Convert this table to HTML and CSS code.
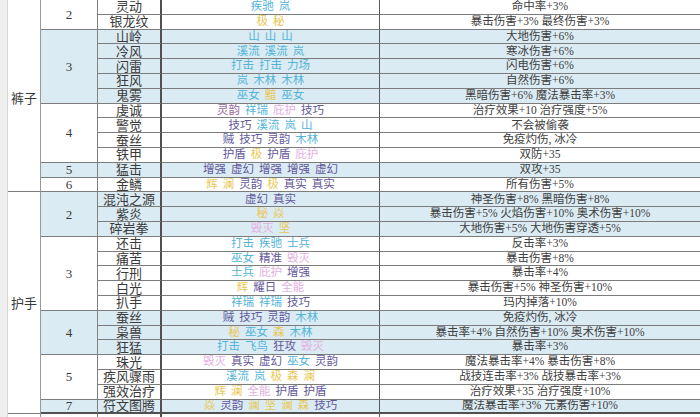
FILE: index.html
```html
<!DOCTYPE html>
<html lang="zh">
<head>
<meta charset="utf-8">
<link rel="stylesheet" href="styles.css">
</head>
<body>
<div class="sheet">
  <div class="strip"></div>

  <div class="cat s13">裤子</div>
  <div class="lvl s2">2</div>
  <div class="name">灵动</div><div class="rune"><i class="b">疾驰</i><i class="b">岚</i></div><div class="eff">命中率+3%</div>
  <div class="name">银龙纹</div><div class="rune"><i class="y">极</i><i class="y">秘</i></div><div class="eff">暴击伤害+3% 最终伤害+3%</div>

  <div class="lvl s5 blue">3</div>
  <div class="name blue">山岭</div><div class="rune blue"><i class="b">山</i><i class="b">山</i><i class="b">山</i></div><div class="eff blue">大地伤害+6%</div>
  <div class="name blue">冷风</div><div class="rune blue"><i class="b">溪流</i><i class="b">溪流</i><i class="b">岚</i></div><div class="eff blue">寒冰伤害+6%</div>
  <div class="name blue">闪雷</div><div class="rune blue"><i class="b">打击</i><i class="b">打击</i><i class="b">力场</i></div><div class="eff blue">闪电伤害+6%</div>
  <div class="name blue">狂风</div><div class="rune blue"><i class="b">岚</i><i class="b">木林</i><i class="b">木林</i></div><div class="eff blue">自然伤害+6%</div>
  <div class="name blue">鬼雾</div><div class="rune blue"><i class="b">巫女</i><i class="y">黯</i><i class="b">巫女</i></div><div class="eff blue">黑暗伤害+6% 魔法暴击率+3%</div>

  <div class="lvl s4">4</div>
  <div class="name">虔诚</div><div class="rune"><i class="m">灵韵</i><i class="b">祥瑞</i><i class="p">庇护</i><i class="v">技巧</i></div><div class="eff">治疗效果+10 治疗强度+5%</div>
  <div class="name">警觉</div><div class="rune"><i class="v">技巧</i><i class="b">溪流</i><i class="b">岚</i><i class="b">山</i></div><div class="eff">不会被偷袭</div>
  <div class="name">蚕丝</div><div class="rune"><i class="v">贼</i><i class="v">技巧</i><i class="v">灵韵</i><i class="b">木林</i></div><div class="eff">免疫灼伤, 冰冷</div>
  <div class="name">铁甲</div><div class="rune"><i class="v">护盾</i><i class="y">极</i><i class="v">护盾</i><i class="p">庇护</i></div><div class="eff">双防+35</div>

  <div class="lvl blue">5</div>
  <div class="name blue">猛击</div><div class="rune blue"><i class="v">增强</i><i class="v">虚幻</i><i class="v">增强</i><i class="v">增强</i><i class="v">虚幻</i></div><div class="eff blue">双攻+35</div>

  <div class="lvl">6</div>
  <div class="name">金鳞</div><div class="rune"><i class="y">辉</i><i class="y">澜</i><i class="v">灵韵</i><i class="y">极</i><i class="v">真实</i><i class="v">真实</i></div><div class="eff">所有伤害+5%</div>

  <div class="cat s15 cat2">护手</div>
  <div class="lvl s3 blue">2</div>
  <div class="name blue">混沌之源</div><div class="rune blue"><i class="v">虚幻</i><i class="v">真实</i></div><div class="eff blue">神圣伤害+8% 黑暗伤害+8%</div>
  <div class="name blue">紫炎</div><div class="rune blue"><i class="y">秘</i><i class="y">焱</i></div><div class="eff blue">暴击伤害+5% 火焰伤害+10% 奥术伤害+10%</div>
  <div class="name blue">碎岩拳</div><div class="rune blue"><i class="p">毁灭</i><i class="y">坚</i></div><div class="eff blue">大地伤害+5% 大地伤害穿透+5%</div>

  <div class="lvl s5">3</div>
  <div class="name">还击</div><div class="rune"><i class="b">打击</i><i class="b">疾驰</i><i class="b">士兵</i></div><div class="eff">反击率+3%</div>
  <div class="name">痛苦</div><div class="rune"><i class="b">巫女</i><i class="v">精准</i><i class="p">毁灭</i></div><div class="eff">暴击伤害+8%</div>
  <div class="name">行刑</div><div class="rune"><i class="b">士兵</i><i class="p">庇护</i><i class="v">增强</i></div><div class="eff">暴击率+4%</div>
  <div class="name">白光</div><div class="rune"><i class="y">辉</i><i class="v">耀日</i><i class="p">全能</i></div><div class="eff">暴击伤害+5% 神圣伤害+10%</div>
  <div class="name">扒手</div><div class="rune"><i class="b">祥瑞</i><i class="b">祥瑞</i><i class="v">技巧</i></div><div class="eff">玛内掉落+10%</div>

  <div class="lvl s3 blue">4</div>
  <div class="name blue">蚕丝</div><div class="rune blue"><i class="v">贼</i><i class="v">技巧</i><i class="v">灵韵</i><i class="b">木林</i></div><div class="eff blue">免疫灼伤, 冰冷</div>
  <div class="name blue">枭兽</div><div class="rune blue"><i class="y">秘</i><i class="b">巫女</i><i class="y">森</i><i class="b">木林</i></div><div class="eff blue">暴击率+4% 自然伤害+10% 奥术伤害+10%</div>
  <div class="name blue">狂猛</div><div class="rune blue"><i class="b">打击</i><i class="b">飞鸟</i><i class="v">狂攻</i><i class="p">毁灭</i></div><div class="eff blue">暴击率+3%</div>

  <div class="lvl s3">5</div>
  <div class="name">珠光</div><div class="rune"><i class="p">毁灭</i><i class="v">真实</i><i class="v">虚幻</i><i class="b">巫女</i><i class="v">灵韵</i></div><div class="eff">魔法暴击率+4% 暴击伤害+8%</div>
  <div class="name">疾风骤雨</div><div class="rune"><i class="b">溪流</i><i class="b">岚</i><i class="y">极</i><i class="y">森</i><i class="y">澜</i></div><div class="eff">战技连击率+3% 战技暴击率+3%</div>
  <div class="name">强效治疗</div><div class="rune"><i class="y">辉</i><i class="y">澜</i><i class="p">全能</i><i class="v">护盾</i><i class="v">护盾</i></div><div class="eff">治疗效果+35 治疗强度+10%</div>

  <div class="lvl blue last">7</div>
  <div class="name blue last">符文图腾</div><div class="rune blue last"><i class="y">焱</i><i class="v">灵韵</i><i class="y">澜</i><i class="y">坚</i><i class="y">澜</i><i class="y">森</i><i class="v">技巧</i></div><div class="eff blue last">魔法暴击率+3% 元素伤害+10%</div>

  <div class="cat"></div><div class="lvl"></div><div class="name"></div><div class="rune"></div><div class="eff"></div>
</div>
</body>
</html>
```

FILE: styles.css
```css
html, body {
  margin: 0;
  padding: 0;
  background: #ffffff;
}
body {
  width: 700px;
  height: 417px;
  overflow: hidden;
  font-family: "Liberation Serif", "Noto Sans CJK SC", serif;
  color: #3a3a3a;
}
.sheet {
  display: grid;
  grid-template-columns: 8px 33px 57px 64px 218px 320px;
  grid-template-rows: repeat(28, 14.8px) 20px;
  border-top: 1px solid #7a7a7a;
  margin-top: -1px;
}
.sheet > div {
  box-sizing: border-box;
  display: flex;
  align-items: center;
  justify-content: center;
  border-bottom: 1px solid #7c7c7c;
  white-space: nowrap;
  overflow: hidden;
  line-height: 1;
}
.strip {
  grid-column: 1;
  grid-row: 1 / -1;
  background: #eeeeee;
  border-right: 1px solid #d8d8d8;
  border-bottom: none !important;
}
.cat {
  grid-column: 2;
  font-size: 13px;
  border-right: 1px solid #999;
  padding-top: 6px;
}
.cat2 {
  padding-top: 2px;
}
.lvl {
  grid-column: 3;
  font-size: 13px;
  border-right: 1px solid #808080;
}
.name {
  grid-column: 4;
  font-size: 13px;
  border-right: 2px solid #505050;
}
.rune {
  grid-column: 5;
  font-size: 11.5px;
  gap: 5px;
  border-right: 1px solid #5a5a5a;
}
.eff {
  grid-column: 6;
  font-size: 11.5px;
  color: #404040;
}
.rune i {
  font-style: normal;
}
.s2 { grid-row: span 2; }
.s3 { grid-row: span 3; }
.s4 { grid-row: span 4; }
.s5 { grid-row: span 5; }
.s13 { grid-row: span 13; }
.s15 { grid-row: span 15; }
.blue {
  background: #daebf3;
}
.last {
  border-bottom: 2px solid #505050 !important;
}
.b { color: #52b4d8; }
.y { color: #eac752; }
.p { color: #e4b0e2; }
.v { color: #62579a; }
.m { color: #96669a; }
```
